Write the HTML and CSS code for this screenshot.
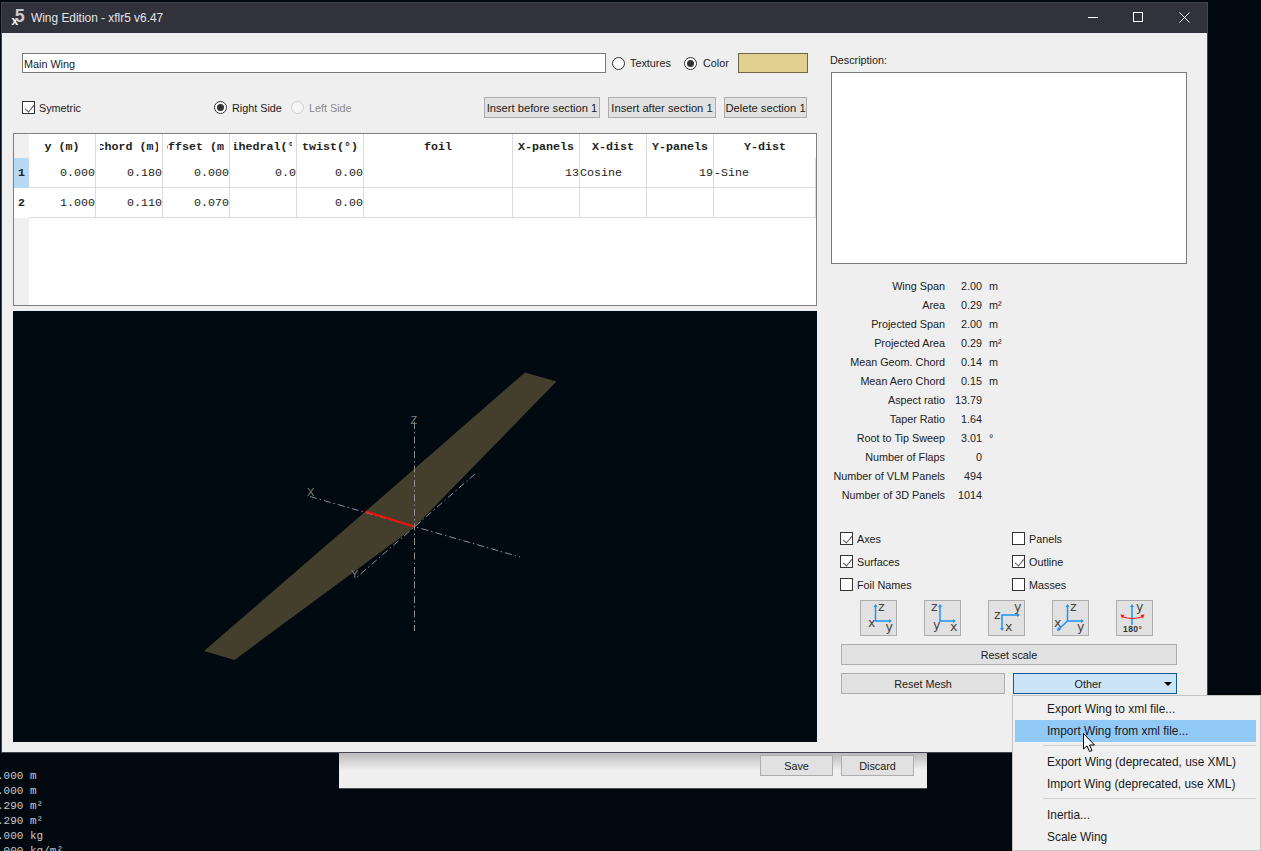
FILE: index.html
```html
<!DOCTYPE html>
<html lang="en">
<head>
<meta charset="utf-8">
<title>Wing Edition - xflr5 v6.47</title>
<link rel="stylesheet" href="styles.css">
</head>
<body>
<pre class="console">.000 m
.000 m
.290 m²
.290 m²
.000 kg
.000 kg/m²</pre>

<div class="back-dialog">
  <button class="btn save">Save</button>
  <button class="btn discard">Discard</button>
</div>

<div class="window">
  <header class="titlebar">
    <svg class="logo" width="18" height="18" viewBox="0 0 18 18">
      <text x="0.500" y="15.500" class="logo-mark"><tspan class="logo-x">x</tspan><tspan class="logo-five" dx="-3.500" dy="-2.500">5</tspan></text>
    </svg>
    <span class="title">Wing Edition - xflr5 v6.47</span>
    <svg class="controls" width="120" height="30" viewBox="0 0 120 30">
      <path d="M1 14.500h10" class="ctl"/>
      <rect x="46.500" y="9.500" width="9" height="9" class="ctl"/>
      <path d="M92.500 9.500l10 10M102.500 9.500l-10 10" class="ctl"/>
    </svg>
  </header>

  <div class="content">
    <div class="left">
      <div class="name-row">
        <div class="name-input">Main Wing</div>
        <span class="radio first"></span><span class="lbl w-textures">Textures</span>
        <span class="radio on"></span><span class="lbl w-color">Color</span>
        <div class="swatch"></div>
      </div>
      <div class="section-row">
        <span class="check on"></span><span class="lbl sym">Symetric</span>
        <span class="radio on"></span><span class="lbl w-right">Right Side</span>
        <span class="radio off"></span><span class="lbl disabled">Left Side</span>
        <div class="section-buttons">
          <button class="btn b1">Insert before section 1</button>
          <button class="btn b2">Insert after section 1</button>
          <button class="btn b3">Delete section 1</button>
        </div>
      </div>

      <div class="table">
        <div class="corner"></div>
        <div class="th"><span>y (m)</span></div>
        <div class="th"><span>chord (m)</span></div>
        <div class="th"><span>offset (m)</span></div>
        <div class="th"><span>dihedral(°)</span></div>
        <div class="th"><span>twist(°)</span></div>
        <div class="th"><span>foil</span></div>
        <div class="th"><span>X-panels</span></div>
        <div class="th"><span>X-dist</span></div>
        <div class="th"><span>Y-panels</span></div>
        <div class="th"><span>Y-dist</span></div>

        <div class="rh sel">1</div>
        <div class="td num">0.000</div>
        <div class="td num">0.180</div>
        <div class="td num">0.000</div>
        <div class="td num">0.0</div>
        <div class="td num">0.00</div>
        <div class="td"></div>
        <div class="td num">13</div>
        <div class="td">Cosine</div>
        <div class="td num">19</div>
        <div class="td">-Sine</div>

        <div class="rh">2</div>
        <div class="td num">1.000</div>
        <div class="td num">0.110</div>
        <div class="td num">0.070</div>
        <div class="td"></div>
        <div class="td num">0.00</div>
        <div class="td"></div>
        <div class="td"></div>
        <div class="td"></div>
        <div class="td"></div>
        <div class="td"></div>
      </div>

      <svg class="view" width="804" height="431" viewBox="13 311 804 431">
        <polygon class="wing" points="525,372.5 556.5,381.5 414,527.5 234.5,660 204,651 366,511"/>
        <path class="axis" d="M414.5 422V631M310 496.5L520 557M475 474L356 578"/>
        <path class="red" d="M366 511.5L414 526.5"/>
        <text class="axis-label" x="307" y="496">X</text>
        <text class="axis-label" x="351" y="578">Y</text>
        <text class="axis-label" x="410.5" y="424">Z</text>
      </svg>
    </div>

    <div class="right">
      <div class="desc-label">Description:</div>
      <div class="desc"></div>

      <div class="stats">
        <span>Wing Span</span><span>2.00</span><span>m</span>
        <span>Area</span><span>0.29</span><span>m²</span>
        <span>Projected Span</span><span>2.00</span><span>m</span>
        <span>Projected Area</span><span>0.29</span><span>m²</span>
        <span>Mean Geom. Chord</span><span>0.14</span><span>m</span>
        <span>Mean Aero Chord</span><span>0.15</span><span>m</span>
        <span>Aspect ratio</span><span>13.79</span><span></span>
        <span>Taper Ratio</span><span>1.64</span><span></span>
        <span>Root to Tip Sweep</span><span>3.01</span><span>°</span>
        <span>Number of Flaps</span><span>0</span><span></span>
        <span>Number of VLM Panels</span><span>494</span><span></span>
        <span>Number of 3D Panels</span><span>1014</span><span></span>
      </div>

      <div class="checks">
        <label class="opt"><span class="check on"></span>Axes</label>
        <label class="opt"><span class="check"></span>Panels</label>
        <label class="opt"><span class="check on"></span>Surfaces</label>
        <label class="opt"><span class="check on"></span>Outline</label>
        <label class="opt"><span class="check"></span>Foil Names</label>
        <label class="opt"><span class="check"></span>Masses</label>
      </div>

      <div class="icons">
        <button class="icon-btn">
          <svg width="35" height="34" viewBox="1 1 35 34">
            <path class="ax" d="M15.500 6V21H30"/><path class="head" d="M15.500 4l-2 3h4zM32 21l-3-2v4z"/>
            <text x="18" y="11" class="ic">z</text><text x="8" y="27" class="ic">x</text><text x="25.500" y="31" class="ic">y</text>
          </svg>
        </button>
        <button class="icon-btn">
          <svg width="35" height="34" viewBox="1 1 35 34">
            <path class="ax" d="M16 6V21H30"/><path class="head" d="M16 4l-2 3h4zM32 21l-3-2v4z"/>
            <text x="7" y="11" class="ic">z</text><text x="9" y="29" class="ic">y</text><text x="26" y="31" class="ic">x</text>
          </svg>
        </button>
        <button class="icon-btn">
          <svg width="35" height="34" viewBox="1 1 35 34">
            <path class="ax" d="M30 15H14V29"/><path class="head" d="M32 15l-3-2v4zM14 31l-2-3h4z"/>
            <text x="6" y="19" class="ic">z</text><text x="26" y="11" class="ic">y</text><text x="17" y="31" class="ic">x</text>
          </svg>
        </button>
        <button class="icon-btn">
          <svg width="35" height="34" viewBox="1 1 35 34">
            <path class="ax" d="M15.500 6V21H30M15.500 21L6 30"/><path class="head" d="M15.500 4l-2 3h4zM32 21l-3-2v4zM5 31l1-4 3 3z"/>
            <text x="18" y="11" class="ic">z</text><text x="2" y="27" class="ic">x</text><text x="25" y="31" class="ic">y</text>
          </svg>
        </button>
        <button class="icon-btn">
          <svg width="35" height="34" viewBox="1 1 35 34">
            <path class="ax" d="M16 6V25"/><path class="head" d="M16 4l-2 3h4z"/>
            <path class="rot" d="M6 16.500Q16.500 20.500 27 16.500"/><path class="rot-head" d="M4.500 14.500l4 .5-2.500 3.500zM28.500 14.500l-4 .5 2.500 3.500z"/>
            <text x="20" y="11" class="ic">y</text><text x="7" y="32" class="ic-small">180°</text>
          </svg>
        </button>
      </div>

      <button class="btn reset-scale">Reset scale</button>
      <div class="bottom-row">
        <button class="btn reset-mesh">Reset Mesh</button>
        <button class="btn other">Other<span class="arrow"></span></button>
      </div>
    </div>
  </div>
</div>

<nav class="menu">
  <div class="item">Export Wing to xml file...</div>
  <div class="item hot">Import Wing from xml file...</div>
  <div class="sep"></div>
  <div class="item">Export Wing (deprecated, use XML)</div>
  <div class="item">Import Wing (deprecated, use XML)</div>
  <div class="sep"></div>
  <div class="item">Inertia...</div>
  <div class="item">Scale Wing</div>
</nav>

<svg class="cursor" width="14" height="20" viewBox="0 0 14 20">
  <path d="M0.500 0.500V16L4 12.800L6.500 18.500L9 17.500L6.500 12H11.500Z" fill="#fff" stroke="#000" stroke-width="1"/>
</svg>
</body>
</html>
```
FILE: styles.css
```css
* { box-sizing: border-box; }
html, body { margin: 0; padding: 0; }
body {
  width: 1261px;
  height: 851px;
  overflow: hidden;
  position: relative;
  background: #01080f;
  font: 10.8px "Liberation Sans", Arial, sans-serif;
  color: #1a1a1a;
}

.console {
  position: absolute;
  left: -3px;
  top: 769px;
  margin: 0;
  font: 11px/15px "Liberation Mono", monospace;
  color: #c8c8c8;
}

.back-dialog {
  position: absolute;
  left: 339px;
  top: 740px;
  width: 588px;
  height: 49px;
  padding: 15px 13px 0 0;
  display: flex;
  justify-content: flex-end;
  gap: 8px;
  background: linear-gradient(#bdbdbd 14px, #efefef 30px);
  border-bottom: 1px solid #4a4a50;
}
.save, .discard { width: 73px; height: 21px; }

.window {
  position: absolute;
  left: 1px;
  top: 2px;
  width: 1207px;
  height: 751px;
  border: 1px solid #44454f;
  background: #efefef;
}

.titlebar {
  height: 30px;
  background: #31323c;
  display: flex;
  align-items: center;
  padding-left: 9px;
}
.logo { flex: none; overflow: visible; }
.logo-five { font: bold 18px "Liberation Sans", sans-serif; fill: #c8c8c8; }
.logo-x { font: bold 12px "Liberation Sans", sans-serif; fill: #fff; }
.title { margin-left: 2px; font-size: 11.900px; color: #e4e4e4; }
.controls { margin-left: auto; flex: none; }
.ctl { fill: none; stroke: #fff; stroke-width: 1; }

.content { display: flex; padding-left: 11px; }
.left { width: 804px; flex: none; }
.right { width: 357px; flex: none; margin-left: 13px; }

.name-row {
  display: flex;
  align-items: center;
  padding: 20px 0 0 9px;
}
.name-input {
  width: 584px;
  height: 20px;
  border: 1px solid #7a7a7a;
  background: #fff;
  padding-left: 1px;
  line-height: 20px;
  margin-right: 6px;
}
.lbl { line-height: 14px; }
.radio {
  width: 13px;
  height: 13px;
  flex: none;
  border: 1px solid #333;
  border-radius: 50%;
  background: #fff;
  position: relative;
  margin-right: 5px;
}
.radio.on::after {
  content: "";
  position: absolute;
  left: 2px;
  top: 2px;
  width: 7px;
  height: 7px;
  border-radius: 50%;
  background: #333;
}
.radio.off { border-color: #cfcfcf; background: #f5f5f5; }
.w-textures { width: 54px; }
.w-color { width: 35px; margin-left: 1px; }
.w-right { width: 59px; }
.swatch {
  width: 70px;
  height: 20px;
  background: #e1d08f;
  border: 1px solid #6e6446;
}

.section-row {
  display: flex;
  align-items: center;
  margin-top: 24px;
  padding-left: 9px;
  height: 21px;
}
.check {
  width: 13px;
  height: 13px;
  flex: none;
  border: 1px solid #333;
  background: #fff;
  position: relative;
  margin-right: 4px;
}
.check.on::after {
  content: "";
  position: absolute;
  left: 3.5px;
  top: 0.5px;
  width: 4px;
  height: 8px;
  border: solid #555;
  border-width: 0 1.4px 1.4px 0;
  transform: rotate(40deg);
}
.sym { width: 175px; }
.disabled { color: #8a8a8a; }
.section-buttons { margin-left: auto; display: flex; gap: 8px; padding-right: 10px; }

.btn {
  height: 21px;
  padding: 0;
  border: 1px solid #adadad;
  background: #e1e1e1;
  font: inherit;
  color: #1a1a1a;
}
.b1, .b2, .b3 { font-size: 11.200px; }
.b1 { width: 116px; }
.b2 { width: 108px; }
.b3 { width: 83px; }

.table {
  margin-top: 15px;
  height: 173px;
  border: 1px solid #7f7f7f;
  background: #fff;
  display: grid;
  grid-template-columns: 15px repeat(5, 67px) 149px repeat(3, 67px) 102px;
  grid-template-rows: 24px 30px 30px;
  font: 11.67px "Liberation Mono", monospace;
  color: #222;
  position: relative;
}
.table::before {
  content: "";
  position: absolute;
  left: 0;
  top: 84px;
  width: 15px;
  bottom: 0;
  background: #f0f0f0;
}
.corner { background: #f0f0f0; }
.th {
  padding: 1px 4px 0;
  border-right: 1px solid #dcdcdc;
  font-weight: bold;
  display: flex;
  align-items: center;
  overflow: hidden;
}
.th:nth-child(11) { border-right: 0; }
.th span {
  flex: 1;
  display: flex;
  justify-content: center;
  white-space: pre;
  overflow: hidden;
}
.rh {
  padding-left: 4px;
  display: flex;
  align-items: center;
  font-weight: bold;
  background: #fff;
}
.rh.sel { background: #b7d9f3; }
.td {
  border-right: 1px solid #dcdcdc;
  border-bottom: 1px solid #dcdcdc;
  display: flex;
  align-items: center;
  white-space: pre;
}
.num { justify-content: flex-end; }

.view {
  display: block;
  margin-top: 5px;
  background: #010911;
}
.wing { fill: #433f2c; }
.axis {
  fill: none;
  stroke: #8f8f8f;
  stroke-width: 1;
  stroke-dasharray: 7 3 1.500 3;
}
.red { stroke: #f01010; stroke-width: 2; fill: none; }
.axis-label { font: 11px "Liberation Sans", sans-serif; fill: #7d7d7d; }

.desc-label { margin-top: 20px; line-height: 14px; }
.desc {
  margin: 5px 0 0 1px;
  width: 356px;
  height: 192px;
  border: 1px solid #7a7a7a;
  background: #fff;
}

.stats {
  margin: 12px 0 0 1px;
  display: grid;
  grid-template-columns: 114px 37px 60px;
  grid-auto-rows: 19px;
  align-items: center;
  color: #222;
  white-space: nowrap;
}
.stats span:nth-child(3n+1),
.stats span:nth-child(3n+2) { text-align: right; }
.stats span:nth-child(3n) { padding-left: 7px; }

.checks {
  margin: 23px 0 0 10px;
  display: grid;
  grid-template-columns: 172px 150px;
  grid-auto-rows: 23px;
  align-items: center;
}
.opt { display: flex; align-items: center; }
.opt .check { margin-right: 4px; }

.icons {
  margin: 4px 0 0 30px;
  display: flex;
  gap: 27px;
}
.icon-btn {
  width: 37px;
  height: 36px;
  padding: 0;
  border: 1px solid #adadad;
  background: #e1e1e1;
  flex: none;
}
.icon-btn svg { display: block; overflow: visible; }
.ax { fill: none; stroke: #1e90ff; stroke-width: 1.500; }
.head { fill: #1e90ff; }
.rot { fill: none; stroke: #f01818; stroke-width: 1.200; }
.rot-head { fill: #f01818; }
.ic { font: 12.500px "DejaVu Sans", sans-serif; fill: #444; }
.ic-small { font: bold 8.500px "Liberation Sans", sans-serif; fill: #333; letter-spacing: 0.400px; }

.reset-scale { display: block; margin: 8px 0 0 11px; width: 336px; }
.bottom-row { display: flex; gap: 8px; margin: 8px 0 0 11px; }
.reset-mesh, .other { width: 164px; }
.other {
  position: relative;
  background: #cce4f7;
  border-color: #0b5a9a;
  padding-right: 14px;
}
.arrow {
  position: absolute;
  right: 4px;
  top: 8px;
  border: solid transparent;
  border-width: 4px 4px 0;
  border-top-color: #000;
}

.menu {
  position: absolute;
  left: 1012px;
  top: 695px;
  width: 249px;
  height: 156px;
  padding: 2px 4px 0 2px;
  background: #f0f0f0;
  border: 1px solid #c4c4c4;
  font-size: 11.900px;
}
.item {
  height: 22px;
  line-height: 23px;
  padding-left: 32px;
  color: #1a1a1a;
}
.item.hot { background: #91c9f7; }
.sep {
  height: 9px;
  margin-left: 28px;
  position: relative;
}
.sep::after {
  content: "";
  position: absolute;
  left: 0;
  right: 0;
  top: 3px;
  height: 1px;
  background: #cfcfcf;
}
.cursor { position: absolute; left: 1083px; top: 733px; }
```
